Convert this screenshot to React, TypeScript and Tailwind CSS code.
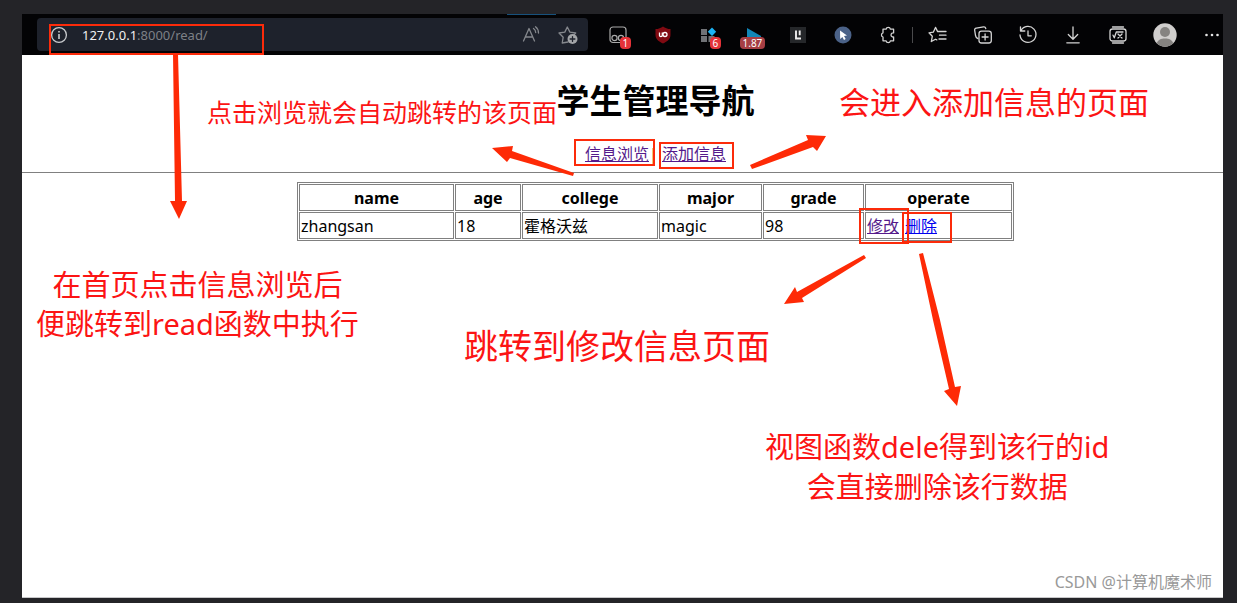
import type { ReactNode } from "react";

const columns = [
  { title: "name", width: "w-[155px]" },
  { title: "age", width: "w-[66px]" },
  { title: "college", width: "w-[136px]" },
  { title: "major", width: "w-[103px]" },
  { title: "grade", width: "w-[101px]" },
  { title: "operate", width: "w-[147px]" },
];

const student = ["zhangsan", "18", "霍格沃兹", "magic", "98"];

const cell = "h-[27px] border border-[#808080] px-px leading-6";

function ToolButton({ label, children }: { label: string; children: ReactNode }) {
  return (
    <button type="button" aria-label={label} className="flex h-10 w-[45px] shrink-0 items-center justify-center">
      {children}
    </button>
  );
}

function Badge({ children, className }: { children: ReactNode; className: string }) {
  return (
    <span className={`absolute rounded-sm px-[3px] text-center text-[10px] leading-3 text-white ${className}`}>
      {children}
    </span>
  );
}

function Stroke({ children, size = "size-5" }: { children: ReactNode; size?: string }) {
  return (
    <svg viewBox="0 0 20 20" className={size} fill="none" stroke="currentColor" strokeWidth="1.3" strokeLinecap="round" strokeLinejoin="round">
      {children}
    </svg>
  );
}

function Toolbar() {
  return (
    <header className="relative flex h-[41px] items-center overflow-hidden bg-[#030305] pl-[15px] text-[#d4d4d4]">
      <span className="absolute top-0 left-[485px] h-px w-[49px] bg-[#17517c]" />
      <div className="flex h-[33px] min-w-0 flex-1 items-center rounded bg-[#1e222c] pr-[10px] pl-[13px]">
        <button type="button" aria-label="Site information" className="shrink-0">
          <svg viewBox="0 0 18 18" className="size-[18px]" fill="none" stroke="#c8cacd" strokeWidth="1.3">
            <circle cx="9" cy="9" r="7.4" />
            <path d="M9 8v5M9 5v1.6" strokeWidth="1.6" />
          </svg>
        </button>
        <div role="textbox" aria-label="Address" className="ml-[14px] min-w-0 flex-1 truncate text-[13px] leading-5 text-[#7d8086]">
          <span className="text-[#f0f0f0]">127.0.0.1</span>:8000/read/
        </div>
        <button type="button" aria-label="Read aloud" className="mr-[17px] text-[#85888d]">
          <Stroke>
            <path d="M2.5 16 8 3.5 13.5 16M4.4 12h7.2M12.5 3.5c1.4 1 2.2 2.3 2.2 4M14.5 1.8c2 1.500 3 3.500 3 6.200" />
          </Stroke>
        </button>
        <button type="button" aria-label="Add to favorites" className="text-[#85888d]">
          <Stroke>
            <path d="M10 17 4.200 18l1-5.800L1 8l5.800-.9L9.300 2l2.600 5.100 5.800.9-1.500 1.500" />
            <circle cx="14.500" cy="14" r="5" fill="#a3a5a8" stroke="none" />
            <path d="M14.500 11.600v4.800M12.100 14h4.800" stroke="#1e222c" />
          </Stroke>
        </button>
      </div>
      <div className="ml-[7px] flex shrink-0 items-center">
        <ToolButton label="Reader extension">
          <span className="relative flex">
            <svg viewBox="0 0 20 20" className="size-5" fill="none" stroke="#aaa" strokeWidth="1.2">
              <rect x="2" y="2" width="16" height="15.500" rx="3" />
              <circle cx="6.500" cy="13" r="2.600" />
              <circle cx="13" cy="13" r="2.600" />
            </svg>
            <Badge className="top-[12px] left-[12px] bg-[#e53238]">1</Badge>
          </span>
        </ToolButton>
        <ToolButton label="Ad blocker">
          <svg viewBox="0 0 18 20" className="h-5 w-[18px]">
            <path d="M9 1.500c2 1.600 4.600 2.500 7.500 2.600V10c0 3.800-3 6.400-7.500 8.600C4.500 16.400 1.500 13.800 1.500 10V4.100C4.400 4 7 3.100 9 1.500Z" fill="#800a12" />
            <path d="M5.500 7.500v3c0 1.500 2.800 1.500 2.800 0v-3" fill="none" stroke="#fff" strokeWidth="1.300" />
            <circle cx="11" cy="9.500" r="2" fill="none" stroke="#fff" strokeWidth="1.300" />
          </svg>
        </ToolButton>
        <ToolButton label="Extension tiles">
          <span className="relative flex">
            <svg viewBox="0 0 20 20" className="size-5">
              <path d="M3 4h6v6H3zM3 11h6v6H3zM10.500 11h6v6h-6z" fill="#707276" />
              <path d="m14 2.500 4.200 4.200-4.200 4.200-4.200-4.200z" fill="#1bb3f5" />
            </svg>
            <Badge className="top-[12px] left-[12px] bg-[#e53238]">6</Badge>
          </span>
        </ToolButton>
        <ToolButton label="Playback speed">
          <span className="relative flex">
            <svg viewBox="0 0 20 20" className="size-5">
              <path d="m4 3 14 8v2H4z" fill="#1186b8" />
            </svg>
            <Badge className="top-[12px] left-[-3px] bg-[#a63e44]">1.87</Badge>
          </span>
        </ToolButton>
        <ToolButton label="Language extension">
          <svg viewBox="0 0 16 16" className="size-4">
            <path d="M0 0h16v16H0z" fill="#25272a" />
            <path d="M6 3.500v8h5M9.700 3.500v4.800" fill="none" stroke="#eee" strokeWidth="1.900" />
          </svg>
        </ToolButton>
        <ToolButton label="Pointer extension">
          <svg viewBox="0 0 18 18" className="size-[18px]">
            <circle cx="9" cy="9" r="8.500" fill="#4b6288" />
            <path d="m6 4.500 7 5-3 .6 1.700 3-1.700.9-1.600-3L6.200 13z" fill="#fff" />
          </svg>
        </ToolButton>
        <ToolButton label="Extensions">
          <Stroke>
            <path d="M5 4.200h3.100a2.200 2.200 0 0 1 4.300 0h3.200v3.500a1 1 0 0 1 0 .2 2.100 2.100 0 1 0 0 4.100v3.800h-3.200a2.200 2.200 0 0 1-4.300 0H5V12a2.200 2.200 0 0 1 0-4.200z" />
          </Stroke>
        </ToolButton>
        <span className="mx-[2px] h-4 w-px bg-[#4a4a4c]" />
        <ToolButton label="Favorites">
          <Stroke>
            <path d="m9.500 6.400-2-4-2.200 4.800L1 7.800l3.300 3.500-1 5.200 4.200-2.300 1.300.7M9.500 6.500H18M11.500 10.200H18M11 14h7" />
          </Stroke>
        </ToolButton>
        <ToolButton label="Collections">
          <Stroke>
            <path d="M4.800 13.500C3 13 2.800 12 2.500 10.500L1.700 5.300C1.500 4 2 3.300 3.300 3.100l7.200-1.200c1.300-.2 2 .3 2.300 1.600" />
            <rect x="6" y="6.200" width="12.300" height="11.800" rx="2.500" />
            <path d="M12.100 9v6M9.100 12h6" />
          </Stroke>
        </ToolButton>
        <ToolButton label="History">
          <Stroke>
            <path d="M3 5.500A8 8 0 1 1 2 10M2.500 1.800v4.200h4.300M10 6v4.800h3.300" />
          </Stroke>
        </ToolButton>
        <ToolButton label="Downloads">
          <Stroke>
            <path d="M10 2v12M5.300 9.500 10 14.200l4.700-4.700M3.800 17.800h12.400" />
          </Stroke>
        </ToolButton>
        <ToolButton label="Math solver">
          <Stroke>
            <rect x="2" y="4" width="16" height="12" rx="2.500" />
            <path d="M4.500 2h11M4.500 18h11M5 10.200l1.300 2.600L8.300 7H15M10 9l4 4M14 9l-4 4" />
          </Stroke>
        </ToolButton>
        <button type="button" aria-label="Profile" className="flex h-10 w-[50px] items-center justify-center">
          <svg viewBox="0 0 24 24" className="size-6">
            <circle cx="12" cy="12" r="11.700" fill="#d0cecd" />
            <circle cx="12" cy="9" r="5" fill="#858381" />
            <path d="M3.800 20.200C5 16.800 8 15.500 12 15.500s7 1.300 8.200 4.700A11.700 11.700 0 0 1 3.800 20.200Z" fill="#858381" />
          </svg>
        </button>
        <button type="button" aria-label="More" className="flex h-10 w-[33px] items-center justify-end pr-[3px]">
          <svg viewBox="0 0 16 4" className="h-1 w-4" fill="#e5e5e5">
            <circle cx="2.500" cy="2" r="1.300" />
            <circle cx="8" cy="2" r="1.300" />
            <circle cx="13.500" cy="2" r="1.300" />
          </svg>
        </button>
      </div>
    </header>
  );
}

function Note({ className, children }: { className: string; children: ReactNode }) {
  return <p className={`absolute text-center whitespace-nowrap text-[#fc1414] ${className}`}>{children}</p>;
}

function Annotations() {
  return (
    <div className="pointer-events-none absolute inset-0">
      <svg className="absolute top-0 left-0 h-[603px] w-[1237px]" viewBox="0 0 1237 603" fill="none">
        <g stroke="#fc2b0a" strokeWidth="2">
          <rect x="50" y="25" width="213" height="29" />
          <rect x="575" y="140" width="79" height="25" />
          <rect x="660" y="143" width="73" height="25" />
          <rect x="860" y="209" width="48" height="34" />
          <rect x="903" y="213" width="48" height="29" />
        </g>
        <g fill="#fe2a06">
          <path d="M173 54h5l4 147h5l-8 18-9-18h5z" />
          <path d="m492 148 21-2-1 5 62 22-1 3-63-18-3 4z" />
          <path d="m750 165 58-25-2-5 20 1-9 15-4-4-61 22z" />
          <path d="m864 255 2 3-64 40 2 4-20 2 11-17 2 5z" />
          <path d="m919 254 4-1 17 67 15 67 6-1-4 20-13-15 5-2-16-69z" />
        </g>
      </svg>
      <Note className="top-[94px] left-[207px] text-[25px] leading-9">点击浏览就会自动跳转的该页面</Note>
      <Note className="top-[82px] left-[839px] text-[31px] leading-10">会进入添加信息的页面</Note>
      <Note className="top-[265px] left-[36px] text-[29px] leading-[39px]">
        在首页点击信息浏览后
        <br />
        便跳转到read函数中执行
      </Note>
      <Note className="top-[326px] left-[464px] text-[34px] leading-10">跳转到修改信息页面</Note>
      <Note className="top-[427px] left-[765px] text-[29px] leading-10">
        视图函数dele得到该行的id
        <br />
        会直接删除该行数据
      </Note>
    </div>
  );
}

export default function App() {
  return (
    <div className="relative flex min-h-screen flex-col bg-[#242428] pt-[14px] pr-[14px] pb-[5px] pl-[22px] font-['Noto_Sans','Noto_Sans_CJK_SC',sans-serif]">
      <Toolbar />
      <main className="relative flex-1 border-b border-[#c8c8ca] bg-white pt-[26px] text-base text-black">
        <div className="pl-[66px] text-center">
          <h1 className="text-[33px] leading-10 font-bold">学生管理导航</h1>
          <nav className="mt-[21px] leading-6 text-[#551a8b]">
            <a href="#read" className="underline">信息浏览</a>
            <span className="text-black">| </span>
            <a href="#add" className="underline">添加信息</a>
          </nav>
        </div>
        <hr className="mt-[6px] border-[#808080]" />
        <div className="pl-[66px]">
          <table className="mx-auto mt-[9px] table-fixed border-separate border-spacing-px border border-[#808080]">
            <thead>
              <tr>
                {columns.map((c) => (
                  <th key={c.title} className={`${cell} ${c.width} font-bold`}>{c.title}</th>
                ))}
              </tr>
            </thead>
            <tbody>
              <tr>
                {student.map((value) => (
                  <td key={value} className={cell}>{value}</td>
                ))}
                <td className={cell}>
                  <div className="flex gap-[6px]">
                    <a href="#edit" className="text-[#551a8b] underline">修改</a>
                    <a href="#delete" className="text-[#0000ee] underline">删除</a>
                  </div>
                </td>
              </tr>
            </tbody>
          </table>
        </div>
        <p className="absolute right-[11px] bottom-[3px] text-base leading-6 text-[#999]">CSDN @计算机魔术师</p>
      </main>
      <Annotations />
    </div>
  );
}
